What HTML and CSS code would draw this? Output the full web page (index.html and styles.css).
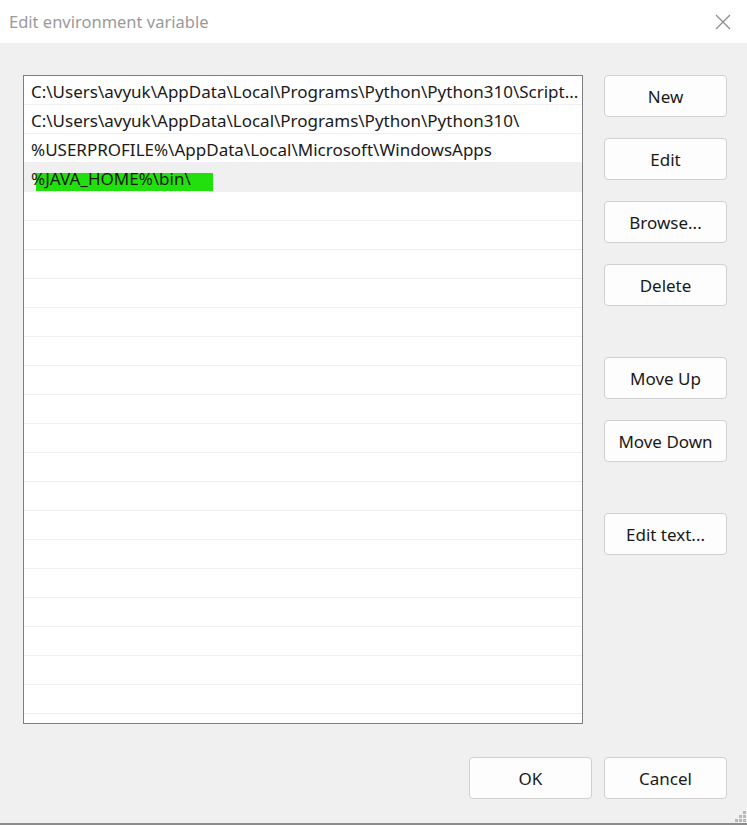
FILE: index.html
```html
<!DOCTYPE html>
<html lang="en">
<head>
<meta charset="utf-8">
<title>Edit environment variable</title>
<link rel="stylesheet" href="styles.css">
</head>
<body>
<div class="window">
  <div class="titlebar">
    <span class="title">Edit environment variable</span>
    <svg class="close" width="16" height="16" viewBox="0 0 16 16"><path d="M1 1 L15 15 M15 1 L1 15" stroke="#8a8a8a" stroke-width="1.2" fill="none"/></svg>
  </div>
  <div class="content">
    <div class="list">
      <div class="row">C:\Users\avyuk\AppData\Local\Programs\Python\Python310\Script...</div>
      <div class="row">C:\Users\avyuk\AppData\Local\Programs\Python\Python310\</div>
      <div class="row">%USERPROFILE%\AppData\Local\Microsoft\WindowsApps</div>
      <div class="row selected"><span class="mark"></span><span class="txt">%JAVA_HOME%\bin\</span></div>
      <div class="row"></div><div class="row"></div><div class="row"></div><div class="row"></div><div class="row"></div>
      <div class="row"></div><div class="row"></div><div class="row"></div><div class="row"></div><div class="row"></div>
      <div class="row"></div><div class="row"></div><div class="row"></div><div class="row"></div><div class="row"></div>
      <div class="row"></div><div class="row"></div><div class="row"></div><div class="row"></div>
    </div>
    <div class="side">
      <button class="btn">New</button>
      <button class="btn">Edit</button>
      <button class="btn">Browse...</button>
      <button class="btn">Delete</button>
      <button class="btn gap-big">Move Up</button>
      <button class="btn">Move Down</button>
      <button class="btn gap-big">Edit text...</button>
    </div>
  </div>
  <div class="footer">
    <button class="btn">OK</button>
    <button class="btn">Cancel</button>
  </div>
  <div class="grip">
    <i class="d d1"></i><i class="d d2"></i><i class="d d3"></i><i class="d d4"></i><i class="d d5"></i><i class="d d6"></i>
  </div>
</div>
</body>
</html>
```
FILE: styles.css
```css
* { box-sizing: border-box; }
html, body { margin: 0; padding: 0; }
body {
  width: 747px;
  height: 825px;
  overflow: hidden;
  font-family: "Noto Sans", "Open Sans", sans-serif;
  font-size: 17px;
  color: #1a1a1a;
  background: #f0f0f0;
}
.window {
  position: relative;
  width: 747px;
  height: 825px;
  background: #f0f0f0;
  border-bottom: 2px solid #8c8c8c;
}
.titlebar {
  height: 43px;
  background: #ffffff;
  display: flex;
  align-items: center;
  justify-content: space-between;
  padding: 0 16px 0 9px;
}
.title {
  color: #9a9a9a;
  font-size: 16.5px;
}
.content {
  display: flex;
  padding: 32px 0 0 23px;
  gap: 21px;
}
.list {
  width: 560px;
  height: 649px;
  border: 1px solid #7f7f7f;
  background: #ffffff;
  overflow: hidden;
}
.row {
  position: relative;
  height: 29px;
  border-bottom: 1px solid #efefef;
  padding: 3px 2px 0 7px;
  line-height: 26px;
  font-size: 17px;
  white-space: nowrap;
  overflow: hidden;
}
.row.selected { background: #f0f0f0; }
.mark {
  position: absolute;
  left: 12px;
  top: 10px;
  width: 177px;
  height: 18px;
  background: #22df0e;
}
.txt { position: relative; }
.side {
  width: 123px;
  display: flex;
  flex-direction: column;
  gap: 21px;
}
.btn {
  width: 123px;
  height: 42px;
  padding: 0;
  background: #fdfdfd;
  border: 1px solid #d0d0d0;
  border-radius: 4px;
  font-family: inherit;
  font-size: 17px;
  color: #1a1a1a;
}
.side .gap-big { margin-top: 30px; }
.footer {
  display: flex;
  justify-content: flex-end;
  gap: 12px;
  padding: 33px 20px 0 0;
}
.grip {
  position: absolute;
  right: 1px;
  bottom: 1px;
  width: 11px;
  height: 11px;
}
.d {
  position: absolute;
  width: 3px;
  height: 3px;
  background: #b8b8b8;
}
.d1 { left: 8px; top: 0; }
.d2 { left: 4px; top: 4px; }
.d3 { left: 8px; top: 4px; }
.d4 { left: 0; top: 8px; }
.d5 { left: 4px; top: 8px; }
.d6 { left: 8px; top: 8px; }
```
